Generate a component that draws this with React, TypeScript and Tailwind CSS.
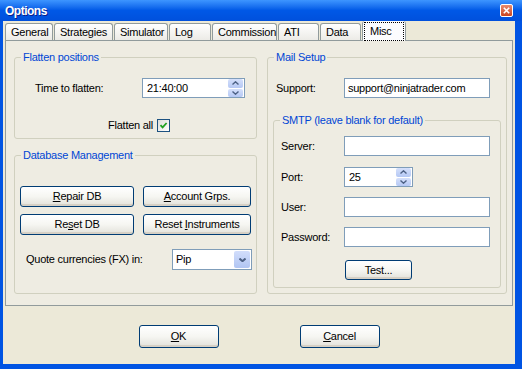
import React from 'react';

const font = { fontFamily: '"Liberation Sans", Arial, sans-serif' };

const tabs = [
  { label: 'General', w: 'w-[48px]' },
  { label: 'Strategies', w: 'w-[59px]' },
  { label: 'Simulator', w: 'w-[54px]' },
  { label: 'Log', w: 'w-[42px]' },
  { label: 'Commission', w: 'w-[65px]' },
  { label: 'ATI', w: 'w-[41px]' },
  { label: 'Data', w: 'w-[41px]' },
];

const XpButton: React.FC<{ className?: string; children: React.ReactNode }> = ({ className = '', children }) => (
  <button
    className={`flex items-center justify-center rounded-[3px] border border-[#003C74] bg-gradient-to-b from-white via-[#F6F6F2] to-[#E2E1DA] text-black shadow-[inset_0_-2px_0_#D6D0C5] ${className}`}
  >
    {children}
  </button>
);

const TextBox: React.FC<{ className?: string; value?: string }> = ({ className = '', value }) => (
  <div className={`flex h-[20px] items-center border border-[#7F9DB9] bg-white pl-[3px] text-black ${className}`}>
    {value}
  </div>
);

const Chevron: React.FC<{ up?: boolean; w?: number }> = ({ up, w = 1.4 }) => (
  <svg width="7" height="4" viewBox="0 0 7 4">
    <path
      d={up ? 'M0.5 3.5 L3.5 0.8 L6.5 3.5' : 'M0.5 0.5 L3.5 3.2 L6.5 0.5'}
      fill="none"
      stroke="#4D6185"
      strokeWidth={w}
    />
  </svg>
);

const Spinner: React.FC<{ value: string; className?: string }> = ({ value, className = '' }) => (
  <div className={`flex h-[20px] items-center border border-[#7F9DB9] bg-white pl-[4px] ${className}`}>
    <span className="flex-1">{value}</span>
    <div className="mr-px flex h-[18px] w-[15px] flex-col gap-px">
      <div className="flex flex-1 items-center justify-center rounded-[2px] bg-gradient-to-b from-[#D5E0FB] to-[#B5C8F4]">
        <Chevron up />
      </div>
      <div className="flex flex-1 items-center justify-center rounded-[2px] bg-gradient-to-b from-[#D5E0FB] to-[#B5C8F4]">
        <Chevron />
      </div>
    </div>
  </div>
);

const Group: React.FC<{ title: string; className?: string; children: React.ReactNode }> = ({ title, className = '', children }) => (
  <fieldset className={`rounded-[3px] border border-[#D0D0BF] ${className}`}>
    <legend className="ml-[6px] px-[2px] leading-[14px] text-[#0046D5]">{title}</legend>
    {children}
  </fieldset>
);

export default function App() {
  return (
    <div
      className="flex h-[369px] w-[522px] flex-col bg-[#0054E3] pb-[5px] pl-[3px] pr-[7px] text-[11px] tracking-[-0.25px] text-black"
      style={font}
    >
      {/* title bar */}
      <div className="-ml-[3px] -mr-[7px] flex h-[21px] shrink-0 items-center justify-between bg-gradient-to-b from-[#3D95FF] via-[#0058E6] to-[#0050DC] pl-[5px] pr-[9px]">
        <span className="text-[12px] font-bold tracking-[-0.5px] text-white [text-shadow:1px_1px_0_#0A1E8C]">Options</span>
        <div className="flex h-[13px] w-[13px] items-center justify-center rounded-[2px] border border-white bg-gradient-to-b from-[#E88A6C] to-[#C8431C]">
          <svg width="7" height="7" viewBox="0 0 7 7">
            <path d="M0.8 0.8 L6.2 6.2 M6.2 0.8 L0.8 6.2" stroke="white" strokeWidth="1.6" />
          </svg>
        </div>
      </div>

      {/* client area */}
      <div className="flex flex-1 flex-col bg-[#ECE9D8]">
        {/* tab strip */}
        <div className="ml-[2px] flex h-[19px] items-end gap-px">
          {tabs.map(t => (
            <div
              key={t.label}
              className={`${t.w} flex h-[17px] items-center rounded-t-[3px] border border-b-0 border-[#919B9C] bg-gradient-to-b from-white to-[#ECEBE6] pl-[5px]`}
            >
              {t.label}
            </div>
          ))}
          <div className="relative z-10 -mb-px flex h-[20px] w-[44px] flex-col rounded-t-[3px] border-x border-[#919B9C] bg-[#FCFCFE]">
            <div className="h-[2px] rounded-t-[2px] bg-[#FFC83C] shadow-[0_1px_0_#E68B2C]" />
            <div className="m-px flex flex-1 items-center border border-dotted border-black pl-[5px]">Misc</div>
          </div>
        </div>

        {/* tab page */}
        <div className="mx-[2px] flex h-[266px] gap-[10px] border border-[#919B9C] bg-[#EEECE2] pl-[8px] pt-[9px]">
          {/* left column */}
          <div className="flex w-[243px] flex-col gap-[9px]">
            <Group title="Flatten positions" className="h-[89px]">
              <div className="mt-[14px] flex h-[20px] items-center">
                <span className="ml-[20px] w-[107px]">Time to flatten:</span>
                <Spinner value="21:40:00" className="w-[103px]" />
              </div>
              <div className="mt-[19px] flex w-[155px] items-center justify-end gap-[4px]">
                <span>Flatten all</span>
                <div className="flex h-[13px] w-[13px] items-center justify-center border border-[#1C5180] bg-gradient-to-br from-[#DCDCD7] to-white">
                  <svg width="9" height="9" viewBox="0 0 9 9">
                    <path d="M1.5 4.2 L3.6 6.4 L7.6 2" fill="none" stroke="#21A121" strokeWidth="1.8" />
                  </svg>
                </div>
              </div>
            </Group>

            <Group title="Database Management" className="h-[146px]">
              <div className="ml-[5px] mt-[24px] grid w-[231px] grid-cols-[114px_108px] gap-x-[9px] gap-y-[7px]">
                <XpButton className="h-[21px]">
                  <span><u>R</u>epair DB</span>
                </XpButton>
                <XpButton className="h-[21px]">
                  <span><u>A</u>ccount Grps.</span>
                </XpButton>
                <XpButton className="h-[21px]">
                  <span>Re<u>s</u>et DB</span>
                </XpButton>
                <XpButton className="h-[21px]">
                  <span>Reset <u>I</u>nstruments</span>
                </XpButton>
              </div>
              <div className="mt-[14px] flex h-[21px] items-center">
                <span className="ml-[11px] w-[146px]">Quote currencies (FX) in:</span>
                <div className="flex h-[21px] w-[80px] items-center border border-[#7F9DB9] bg-white pl-[3px]">
                  <span className="flex-1">Pip</span>
                  <div className="m-px flex h-[17px] w-[16px] items-center justify-center rounded-[2px] bg-gradient-to-b from-[#D2DEFB] to-[#B1C5F3]">
                    <Chevron w={2} />
                  </div>
                </div>
              </div>
            </Group>
          </div>

          {/* right column */}
          <div className="flex w-[240px] flex-col">
            <Group title="Mail Setup" className="h-[244px]">
              <div className="mt-[14px] flex h-[20px] items-center">
                <span className="ml-[8px] w-[68px]">Support:</span>
                <TextBox className="w-[146px]" value="support@ninjatrader.com" />
              </div>

              <Group title="SMTP (leave blank for default)" className="ml-[5px] mt-[15px] h-[175px] w-[228px]">
                <div className="mt-[9px] flex h-[20px] items-center">
                  <span className="ml-[7px] w-[63px]">Server:</span>
                  <TextBox className="w-[146px]" />
                </div>
                <div className="mt-[11px] flex h-[20px] items-center">
                  <span className="ml-[7px] w-[63px]">Port:</span>
                  <Spinner value="25" className="w-[69px] pl-[2px]" />
                </div>
                <div className="mt-[10px] flex h-[20px] items-center">
                  <span className="ml-[7px] w-[63px]">User:</span>
                  <TextBox className="w-[146px]" />
                </div>
                <div className="mt-[10px] flex h-[20px] items-center">
                  <span className="ml-[7px] w-[63px]">Password:</span>
                  <TextBox className="w-[146px]" />
                </div>
                <XpButton className="ml-[71px] mt-[13px] h-[20px] w-[67px]">Test...</XpButton>
              </Group>
            </Group>
          </div>
        </div>

        {/* footer buttons */}
        <div className="mt-[19px] flex justify-center gap-[81px]">
          <XpButton className="h-[23px] w-[80px]">
            <span><u>O</u>K</span>
          </XpButton>
          <XpButton className="h-[23px] w-[80px]">
            <span><u>C</u>ancel</span>
          </XpButton>
        </div>
      </div>
    </div>
  );
}
